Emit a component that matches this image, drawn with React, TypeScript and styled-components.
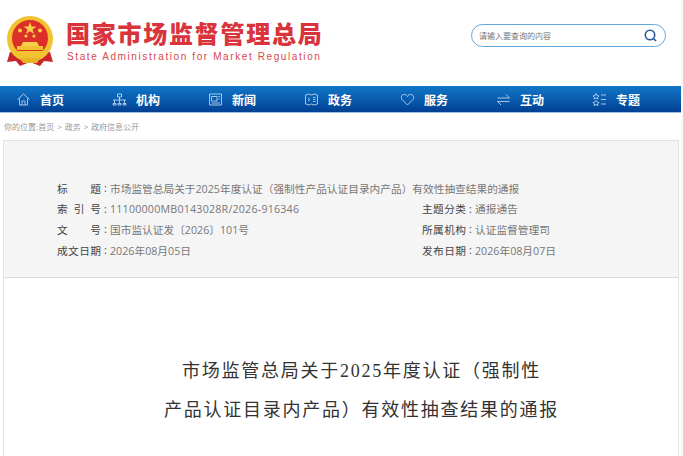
import styled, { createGlobalStyle } from "styled-components";
import type { ReactNode } from "react";

const GlobalStyle = createGlobalStyle`
  html, body {
    margin: 0;
    padding: 0;
    background: #fff;
    overflow: hidden;
  }
  * {
    box-sizing: border-box;
  }
`;

const Page = styled.div`
  width: 683px;
  height: 456px;
  overflow: hidden;
  padding-right: 2px;
  background: #fdf8f3;
  font-family: "Open Sans", "Noto Sans CJK SC", sans-serif;
`;

const Sheet = styled.div`
  background: #fff;
  height: 100%;
`;

const Header = styled.header`
  height: 86px;
  display: flex;
  align-items: flex-start;
  justify-content: space-between;
  padding: 16px 15px 0 6px;
`;

const Brand = styled.div`
  display: flex;
  gap: 12px;
`;

const BrandName = styled.div`
  font-family: "Noto Sans CJK SC", sans-serif;
  font-size: 24px;
  line-height: 33px;
  font-weight: 900;
  letter-spacing: 1.75px;
  color: #d9333c;
  white-space: nowrap;
`;

const BrandEnglish = styled.div`
  margin: 1px 0 0 1px;
  font-family: "Liberation Sans", sans-serif;
  font-size: 10px;
  line-height: 14px;
  letter-spacing: 1.6px;
  color: #d8474e;
  white-space: nowrap;
`;

const SearchBox = styled.div`
  width: 195px;
  height: 23px;
  margin-top: 8px;
  border: 1px solid #62a8dc;
  border-radius: 12px;
  display: flex;
  align-items: center;
  justify-content: space-between;
  padding: 0 7px;
  font-family: "Noto Sans CJK SC", sans-serif;
  font-size: 8px;
  color: #777;
`;

const NavBar = styled.nav`
  height: 27px;
  display: flex;
  padding-left: 16px;
  background: linear-gradient(#1177c8, #0a5cae 50%, #003f92);
  border-bottom: 1px solid #9fc0e6;
`;

const NavItem = styled.a`
  width: 96px;
  flex: none;
  display: flex;
  align-items: center;
  gap: 9px;
  color: #fff;
  font-family: "Noto Sans CJK SC", sans-serif;
  font-size: 12px;
  font-weight: 700;
`;

const NavIcon = styled.svg`
  width: 15px;
  height: 15px;
  flex: none;
  fill: none;
  stroke: #cfe2f4;
  stroke-width: 0.8;
`;

const Breadcrumb = styled.div`
  height: 27px;
  padding: 8px 0 0 4px;
  font-family: "Noto Sans CJK SC", sans-serif;
  font-size: 8px;
  line-height: 12px;
  word-spacing: 1.2px;
  color: #9a9a9a;
`;

const Article = styled.main`
  margin: 0 2px 0 3px;
  border: 1px solid #e2e2e2;
  border-bottom: 0;
  height: 320px;
`;

const Meta = styled.section`
  height: 137px;
  padding: 37px 0 0 53px;
  background: #f5f5f5;
  border-bottom: 1px solid #dcdcdc;
  display: grid;
  grid-template-columns: 365px 1fr;
  grid-auto-rows: 20.6px;
  font-size: 10.7px;
  color: #777;
`;

const MetaRow = styled.div<{ $wide?: boolean }>`
  display: flex;
  align-items: center;
  white-space: nowrap;
  grid-column: ${(p) => (p.$wide ? "1 / -1" : "auto")};
`;

const MetaLabel = styled.span`
  width: 44px;
  flex: none;
  color: #444;
  text-align: justify;
  text-align-last: justify;
  font-family: "Noto Sans CJK SC", sans-serif;
`;

const MetaColon = styled.span`
  width: 9px;
  flex: none;
  text-align: center;
  color: #444;
`;

const MetaCode = styled.span`
  letter-spacing: 0.2px;
`;

const Title = styled.h1`
  margin: 0;
  padding: 74px 0 0 41px;
  text-align: center;
  font-family: "Liberation Serif", "Noto Sans CJK SC", serif;
  font-size: 18px;
  line-height: 39px;
  font-weight: 400;
  letter-spacing: 1.75px;
  color: #333;
`;

function Emblem() {
  return (
    <svg width="48" height="52" viewBox="0 0 48 52" aria-label="emblem">
      <path d="M4 36 L1 46 L10 45 L14 50 L24 46 L34 50 L38 45 L47 46 L44 36 Z" fill="#c8262c" />
      <circle cx="24" cy="23" r="23" fill="#f2c230" />
      <circle cx="24" cy="22" r="18" fill="#dc2f2a" />
      <polygon points="24,6 25.6,10.6 30.4,10.6 26.5,13.4 28,18 24,15.2 20,18 21.5,13.4 17.6,10.6 22.4,10.6" fill="#f6d04a" />
      <circle cx="14" cy="14.5" r="2" fill="#f6d04a" />
      <circle cx="34" cy="14.5" r="2" fill="#f6d04a" />
      <circle cx="20" cy="20" r="1.6" fill="#f6d04a" />
      <circle cx="28" cy="20" r="1.6" fill="#f6d04a" />
      <path d="M15 30 L17 26 H31 L33 30 Z" fill="#f6d04a" />
      <rect x="11" y="30" width="26" height="4" fill="#f2c230" />
      <path d="M8 35 H40 L37 41 Q24 46 11 41 Z" fill="#f2c230" />
      <path d="M14 42 H34 L31 47 H17 Z" fill="#e9b428" />
    </svg>
  );
}

function SearchIcon() {
  return (
    <svg width="15" height="15" viewBox="0 0 15 15" fill="none" stroke="#2a5b9c" strokeWidth="1.6">
      <circle cx="7" cy="7" r="4.7" />
      <path d="M10.2 10.2 L13 13" />
    </svg>
  );
}

const navItems: { label: string; icon: ReactNode }[] = [
  { label: "首页", icon: <path d="M1.5 7.5 L7.5 2 L13.5 7.5 M3.5 6.5 V13 H11.5 V6.5 M6 13 V9 H9 V13" /> },
  { label: "机构", icon: <path d="M5.5 2 H9.5 V5 H5.5 Z M7.5 5 V8 M1 8 H14 M2.5 8 V11 M7.5 8 V11 M12.5 8 V11 M1 11.5 H4 V13 H1 Z M6 11.5 H9 V13 H6 Z M11 11.5 H14 V13 H11 Z" /> },
  { label: "新闻", icon: <path d="M1.5 2 H13.5 V13 H1.5 Z M3.5 4.5 H9 V9 H3.5 Z M10.5 4.5 H12 M10.5 7 H12 M3.5 11 H12" /> },
  { label: "政务", icon: <path d="M1.5 3 L5 2 L7.5 3 L10 2 L13.5 3 V12 L10 13 L7.5 12 L5 13 L1.5 12 Z M4 6 L6 7.5 L4 9 M9 5.5 H11.5 M9 7.5 H11.5 M9 9.5 H11.5" /> },
  { label: "服务", icon: <path d="M7.5 13 L2 7.5 C0.5 5.5 1.5 2.5 4.5 2.5 C6 2.5 7 3.5 7.5 4.5 C8 3.5 9 2.5 10.5 2.5 C13.5 2.5 14.5 5.5 13 7.5 Z" /> },
  { label: "互动", icon: <path d="M1.5 6 H13.5 L10 2.5 M13.5 9.5 H1.5 L5 13" /> },
  { label: "专题", icon: <path d="M4 1.5 L5 3.5 L7 4 L5.5 5.5 L6 7 L4 6 L2 7 L2.5 5.5 L1 4 L3 3.5 Z M4 8.5 L5 10 L7 10.5 L5.5 12 L6 13.5 L4 12.5 L2 13.5 L2.5 12 L1 10.5 L3 10 Z M9 3 H14 M9 7.5 H14 M9 12 H14" /> },
];

export default function App() {
  return (
    <Page>
      <GlobalStyle />
      <Sheet>
        <Header>
          <Brand>
            <Emblem />
            <div>
              <BrandName>国家市场监督管理总局</BrandName>
              <BrandEnglish>State Administration for Market Regulation</BrandEnglish>
            </div>
          </Brand>
          <SearchBox>
            <span>请输入要查询的内容</span>
            <SearchIcon />
          </SearchBox>
        </Header>
        <NavBar>
          {navItems.map((item) => (
            <NavItem key={item.label}>
              <NavIcon viewBox="0 0 15 15">{item.icon}</NavIcon>
              {item.label}
            </NavItem>
          ))}
        </NavBar>
        <Breadcrumb>你的位置:首页 &gt; 政务 &gt; 政府信息公开</Breadcrumb>
        <Article>
          <Meta>
            <MetaRow $wide>
              <MetaLabel>标 题</MetaLabel>
              <MetaColon>:</MetaColon>
              市场监管总局关于2025年度认证（强制性产品认证目录内产品）有效性抽查结果的通报
            </MetaRow>
            <MetaRow>
              <MetaLabel>索 引 号</MetaLabel>
              <MetaColon>:</MetaColon>
              <MetaCode>11100000MB0143028R/2026-916346</MetaCode>
            </MetaRow>
            <MetaRow>
              <MetaLabel>主题分类</MetaLabel>
              <MetaColon>:</MetaColon>
              通报通告
            </MetaRow>
            <MetaRow>
              <MetaLabel>文 号</MetaLabel>
              <MetaColon>:</MetaColon>
              国市监认证发〔2026〕101号
            </MetaRow>
            <MetaRow>
              <MetaLabel>所属机构</MetaLabel>
              <MetaColon>:</MetaColon>
              认证监督管理司
            </MetaRow>
            <MetaRow>
              <MetaLabel>成文日期</MetaLabel>
              <MetaColon>:</MetaColon>
              2026年08月05日
            </MetaRow>
            <MetaRow>
              <MetaLabel>发布日期</MetaLabel>
              <MetaColon>:</MetaColon>
              2026年08月07日
            </MetaRow>
          </Meta>
          <Title>
            市场监管总局关于2025年度认证（强制性
            <br />
            产品认证目录内产品）有效性抽查结果的通报
          </Title>
        </Article>
      </Sheet>
    </Page>
  );
}
